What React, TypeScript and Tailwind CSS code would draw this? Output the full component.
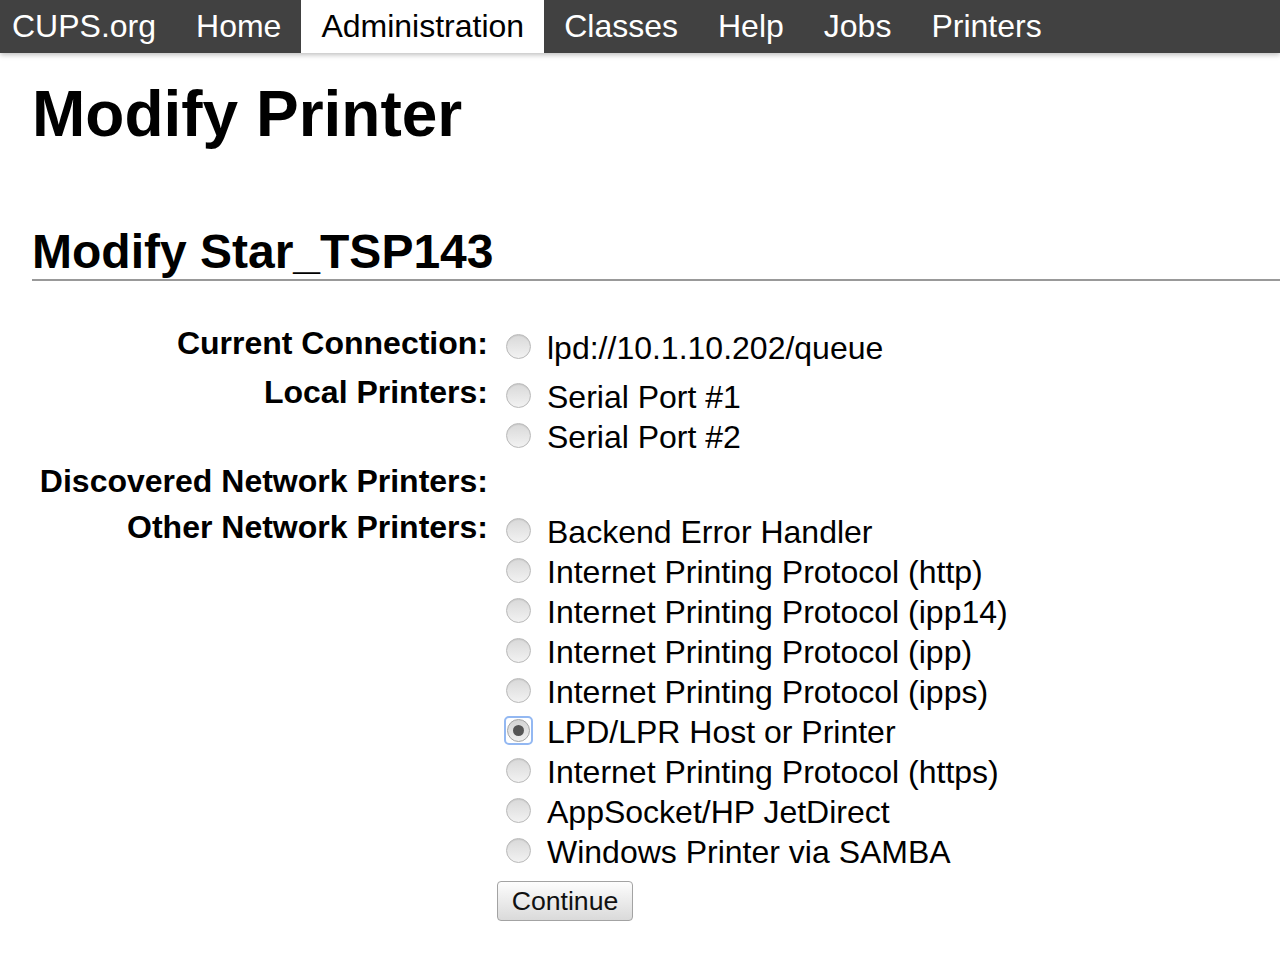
import React from "react";

const FONT = { fontFamily: '"Liberation Sans", Arial, sans-serif' };

function Radio({ checked = false }: { checked?: boolean }) {
  if (checked) {
    return (
      <div className="-mx-[2px] mb-[2px] flex h-[29px] w-[29px] shrink-0 items-center justify-center rounded-[5px] border-2 border-[#93b8f2]">
        <div className="flex h-[23px] w-[23px] items-center justify-center rounded-full border border-[#a3a3a3] bg-linear-to-b from-[#d4d4d4] to-[#efefef]">
          <div className="h-[11px] w-[11px] rounded-full bg-[#555555]" />
        </div>
      </div>
    );
  }
  return (
    <div className="mb-[3px] h-[25px] w-[25px] shrink-0 rounded-full border border-[#b9b9b9] bg-linear-to-b from-[#d9d9d9] to-[#f2f2f2] shadow-[inset_0_1px_1px_rgba(0,0,0,0.08)]" />
  );
}

function Option({ label, checked = false }: { label: string; checked?: boolean }) {
  return (
    <div className="flex h-[40px] items-center gap-[16px] whitespace-nowrap text-[32px] leading-[40px] text-black">
      <Radio checked={checked} />
      <span>{label}</span>
    </div>
  );
}

function Row({
  label,
  children,
  className = "",
}: {
  label: string;
  children?: React.ReactNode;
  className?: string;
}) {
  return (
    <div className={`flex ${className}`}>
      <div className="w-[458px] shrink-0 pr-[2px] text-right text-[32px] font-bold leading-[37px] text-black">
        {label}
      </div>
      <div className="flex flex-col pl-[16px] pt-[3px]">{children}</div>
    </div>
  );
}

export default function App() {
  const nav = ["Home", "Administration", "Classes", "Help", "Jobs", "Printers"];
  const others = [
    "Backend Error Handler",
    "Internet Printing Protocol (http)",
    "Internet Printing Protocol (ipp14)",
    "Internet Printing Protocol (ipp)",
    "Internet Printing Protocol (ipps)",
    "LPD/LPR Host or Printer",
    "Internet Printing Protocol (https)",
    "AppSocket/HP JetDirect",
    "Windows Printer via SAMBA",
  ];
  return (
    <div className="min-h-[964px] w-[1280px] overflow-hidden bg-white" style={FONT}>
      <nav className="relative z-10 flex h-[53px] bg-[#414141] text-[32px] leading-[52px] text-white shadow-[0_2px_5px_rgba(0,0,0,0.25)]">
        <span className="pl-[12px] pr-[20px]">CUPS.org</span>
        {nav.map((n) => (
          <span
            key={n}
            className={
              n === "Administration"
                ? "bg-white px-[20px] text-black"
                : "px-[20px] text-white"
            }
          >
            {n}
          </span>
        ))}
      </nav>

      <main className="pl-[32px]">
        <h1 className="mt-[25px] text-[64px] font-bold leading-[73.6px] text-black">
          Modify Printer
        </h1>
        <h2 className="mt-[72px] border-b-2 border-[#999999] text-[48px] font-bold leading-[55px] text-black">
          Modify Star_TSP143
        </h2>

        <div className="mt-[44px] flex flex-col">
          <Row label="Current Connection:">
            <Option label="lpd://10.1.10.202/queue" />
          </Row>
          <Row label="Local Printers:" className="mt-[6px]">
            <Option label="Serial Port #1" />
            <Option label="Serial Port #2" />
          </Row>
          <Row label="Discovered Network Printers:" className="mt-[6px] h-[40px]" />
          <Row label="Other Network Printers:" className="mt-[6px]">
            {others.map((o) => (
              <Option key={o} label={o} checked={o === "LPD/LPR Host or Printer"} />
            ))}
          </Row>
          <div className="mt-[9px] flex">
            <div className="w-[465px] shrink-0" />
            <button className="h-[40px] w-[136px] rounded-[4px] border border-[#a3a3a3] bg-linear-to-b from-[#fdfdfd] to-[#dadada] text-[26.67px] leading-[38px] text-[#111]">
              Continue
            </button>
          </div>
        </div>
      </main>
    </div>
  );
}
